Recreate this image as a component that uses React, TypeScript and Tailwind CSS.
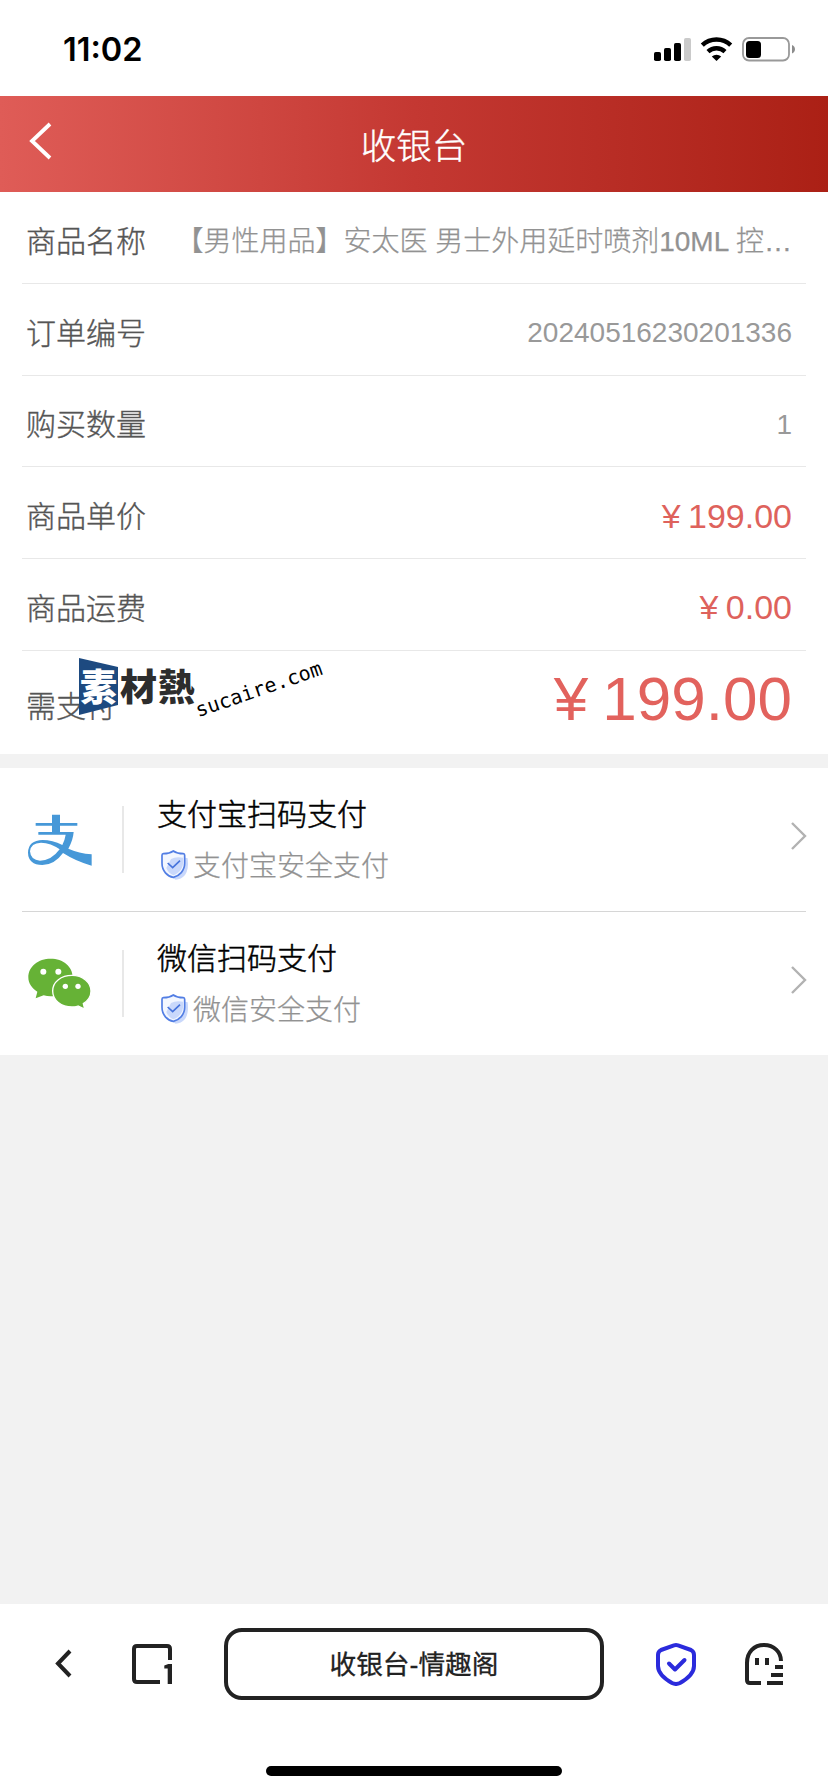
import type { ReactNode } from 'react';

type RowProps = {
  label: string;
  className: string;
  children: ReactNode;
};

const orderNo = '20240516230201336';

const Row = ({ label, className, children }: RowProps) => (
  <div className={`mx-[22px] flex items-center justify-between border-[#e8e8e8] pl-[4px] pr-[14px] ${className}`}>
    <span className="shrink-0 pt-[8px] text-[30px] leading-[40px] font-light text-[#555] [-webkit-text-stroke:0.35px_#555]">
      {label}
    </span>
    {children}
  </div>
);

const StatusBar = () => (
  <div className="flex h-[96px] items-start justify-between bg-white pl-[63px] pr-[31px] pt-[30px]">
    <span className="font-['Inter'] text-[32.5px] leading-[40px] font-semibold text-black">11:02</span>
    <svg width="144" height="28" viewBox="0 0 144 28" className="mt-[6px]">
      <rect x="1" y="16" width="7" height="9" rx="1.8" />
      <rect x="11" y="12" width="7" height="13" rx="1.8" />
      <rect x="21" y="7" width="7" height="18" rx="1.8" />
      <rect x="31" y="2" width="7" height="23" rx="1.8" fill="#cacaca" />
      <g fill="none" stroke="#000" strokeWidth="4.4">
        <path d="M49.300 9.200a20.500 20.500 0 0 1 28.400 0" />
        <path d="M55 15.600a12.500 12.500 0 0 1 17 0" />
      </g>
      <path d="M58.800 20.600a7.200 7.200 0 0 1 9.400 0L63.500 25z" />
      <rect x="90" y="2" width="46" height="22.5" rx="6" fill="none" stroke="#999" strokeWidth="1.8" />
      <rect x="93" y="5" width="15" height="17" rx="3.5" />
      <path d="M139 9c4 1.500 4 7 0 8.600z" fill="#8c8c8c" />
    </svg>
  </div>
);

const ShieldIcon = () => (
  <svg width="30" height="32" viewBox="0 0 90 96" className="-mt-[4px] ml-[2px] shrink-0">
    <path d="M54 20l32 8q4 34-8 50-12 14-28 14-16-6-22-22z" fill="#c9d8fb" />
    <path
      d="M43 6c7 5 18 8 30 8q4 0 4 5v24c0 22-16 38-34 42C25 82 9 66 9 43V19q0-5 4-5c12 0 23-3 30-8z"
      fill="#f3f7ff"
      stroke="#527ee4"
      strokeWidth="5"
    />
    <path d="M36 30q14-8 36-4v18c-2 17-14 29-29 35-9-4-18-12-21-22z" fill="#c9d8fb" />
    <path d="M26 42l15 14 22-21" fill="none" stroke="#4673dc" strokeWidth="5" />
  </svg>
);

const AlipayIcon = () => (
  <svg width="64" height="52" viewBox="84 100 192 156">
    <path
      d="M156 102h24v25h52v8h-52v19h41q-2 25-16 50 32 14 70 17v34q-47-13-86-38-26 36-62 36-42-1-43-37 1-37 44-38 29 0 59 15 8-17 10-31h-82v-8h41v-19h-49v-8h49zM179 206q-26-19-56-20-31 1-33 26 2 27 30 28 34 0 59-34z"
      fill="#4698d8"
      fillRule="evenodd"
    />
  </svg>
);

const WechatIcon = () => (
  <svg width="64" height="52" viewBox="84 535 192 156">
    <path d="M152 537c37 0 66 23 66 56s-29 57-66 57q-11 0-21-3l-24 9 5-20c-17-11-27-25-27-43 0-33 30-56 67-56z" fill="#66b236" />
    <path d="M216 587c32 0 57 21 57 47 0 16-9 29-23 38l4 16-20-9q-8 3-18 3c-32 0-58-20-58-48s26-47 58-47z" fill="#66b236" stroke="#fff" strokeWidth="4" />
    <g fill="#fff">
      <circle cx="130" cy="576" r="9" />
      <circle cx="175" cy="576" r="9" />
      <circle cx="196" cy="620" r="8" />
      <circle cx="234" cy="620" r="8" />
    </g>
  </svg>
);

const payments = [
  { title: '支付宝扫码支付', desc: '支付宝安全支付', icon: <AlipayIcon /> },
  { title: '微信扫码支付', desc: '微信安全支付', icon: <WechatIcon /> },
];

const PaymentList = () => (
  <div className="bg-white px-[22px]">
    {payments.map((item) => (
      <div key={item.title} className="flex h-[144px] items-start border-b border-[#d6d6d6] last:h-[143px] last:border-b-0">
        <div className="mt-[46px] ml-[6px]">{item.icon}</div>
        <div className="mt-[38px] ml-[30px] h-[67px] w-[2px] bg-[#e8e8e8]" />
        <div className="ml-[33px] flex-1 pt-[27px]">
          <div className="text-[30px] leading-[40px] font-light text-black [-webkit-text-stroke:0.5px_#000]">{item.title}</div>
          <div className="mt-[12px] flex h-[40px] items-center">
            <ShieldIcon />
            <span className="ml-[4px] text-[28px] leading-[40px] font-light text-[#929292] [-webkit-text-stroke:0.25px_#929292]">
              {item.desc}
            </span>
          </div>
        </div>
        <svg width="18" height="30" viewBox="0 0 18 30" className="-mr-px mt-[53px]" fill="none" stroke="#b2b2b2" strokeWidth="2.4">
          <path d="M3 2l13 13L3 28" />
        </svg>
      </div>
    ))}
  </div>
);

// site stamp lying over the last order row
const Stamp = () => (
  <div className="absolute left-[79px] top-[7px] h-[60px] w-[260px]">
    <svg width="40" height="57" viewBox="0 0 40 57" className="absolute left-0 top-0">
      <path d="M0 0l39 9v38L0 57z" fill="#1d4a80" />
    </svg>
    <span className="absolute left-[1px] top-[11px] text-[37px] leading-[40px] font-black text-white">素</span>
    <span className="absolute left-[41px] top-[11px] text-[37px] leading-[40px] font-black tracking-[1px] text-[#2d2d2d]">材熱</span>
    <span className="absolute left-[121px] top-[40px] origin-bottom-left -rotate-[19deg] font-['DejaVu_Sans_Mono'] text-[20px] leading-[24px] text-black">
      sucaire.com
    </span>
  </div>
);

const BrowserBar = () => (
  <div className="h-[188px] bg-white">
    <div className="flex h-[120px] items-center">
      <svg width="18" height="30" viewBox="0 0 18 30" className="ml-[55px]" fill="none" stroke="#222" strokeWidth="4">
        <path d="M15 2L3 14.500l12 12.500" />
      </svg>
      <svg width="42" height="42" viewBox="0 0 42 42" className="ml-[58px]" fill="none" stroke="#222" strokeWidth="4">
        <path d="M29 39H6q-3 0-3-3V6q0-3 3-3h30q3 0 3 3v11" />
        <path d="M41 21v20h-4.300V25.500h-3.400V22.500l4-1.500z" fill="#222" stroke="none" />
      </svg>
      <div className="ml-[51px] flex h-[72px] w-[380px] items-center justify-center rounded-[18px] border-4 border-[#222] pt-[2px] text-[26.7px] leading-[40px] text-[#222] [-webkit-text-stroke:0.3px_#222]">
        收银台-情趣阁
      </div>
      <svg width="42" height="44" viewBox="0 0 42 44" className="ml-[51px]" fill="none" stroke="#2b2bdc" strokeWidth="4" strokeLinejoin="round" strokeLinecap="round">
        <path d="M19 3.300L6 8q-3 1.500-3 5v11c0 8 7 13 14 17q4 2 8 0c7-4 14-9 14-17V13q0-3.500-3-5L23 3.300q-2-.6-4 0z" />
        <path d="M14 21.500l6 6 9.500-9.500" />
      </svg>
      <svg width="40" height="44" viewBox="0 0 40 44" className="ml-[47px]" fill="none" stroke="#222" strokeWidth="4">
        <path d="M37 19c0-9-7-16-17-16S3 10 3 21v17q0 3 3 3h11" />
        <path d="M13 16v7M23 16v7M31 25h8M27 33h12M23 41h16" />
      </svg>
    </div>
    <div className="mx-auto mt-[42px] h-[10px] w-[296px] rounded-full bg-black" />
  </div>
);

const App = () => {
  return (
    <div className="flex h-[1792px] w-[828px] flex-col overflow-hidden bg-[#f2f2f2] font-['Liberation_Sans','Noto_Sans_CJK_SC',sans-serif]">
      <StatusBar />

      <div className="flex h-[96px] items-center bg-linear-to-r from-[#df5c57] via-[#c43832] to-[#ab2015]">
        <svg width="24" height="40" viewBox="0 0 24 40" className="mb-[6px] ml-[29px]" fill="none" stroke="#fff" strokeWidth="3.8">
          <path d="M21 3L3 20l18 17" />
        </svg>
        <h1 className="mr-[53px] flex-1 pt-[5px] text-center text-[35.5px] leading-[48px] font-light text-white [-webkit-text-stroke:0.4px_#fff]">
          收银台
        </h1>
      </div>

      <div className="bg-white">
        <Row label="商品名称" className="h-[92px] border-b">
          <span className="pt-[9px] text-[28px] leading-[40px] font-light whitespace-nowrap text-[#929292] [-webkit-text-stroke:0.25px_#929292]">
            【男性用品】安太医 男士外用延时喷剂10ML 控…
          </span>
        </Row>
        <Row label="订单编号" className="h-[92px] border-b">
          <span className="pt-[7px] text-[28px] leading-[40px] text-[#999]">{orderNo}</span>
        </Row>
        <Row label="购买数量" className="h-[91px] border-b">
          <span className="pt-[8px] text-[28px] leading-[40px] text-[#999]">1</span>
        </Row>
        <Row label="商品单价" className="h-[92px] border-b">
          <span className="pt-[6px] text-[34px] leading-[40px] text-[#de625c] [word-spacing:-2px]">¥ 199.00</span>
        </Row>
        <Row label="商品运费" className="h-[92px] border-b">
          <span className="pt-[4px] text-[34px] leading-[40px] text-[#de625c] [word-spacing:-2px]">¥ 0.00</span>
        </Row>
        <div className="relative">
          <Row label="需支付" className="h-[103px]">
            <span className="pb-[7px] text-[62px] leading-[70px] text-[#e2625d] [word-spacing:-3px]">¥ 199.00</span>
          </Row>
          <Stamp />
        </div>
      </div>

      <div className="h-[14px]" />
      <PaymentList />
      <div className="flex-1" />
      <BrowserBar />
    </div>
  );
};

export default App;
